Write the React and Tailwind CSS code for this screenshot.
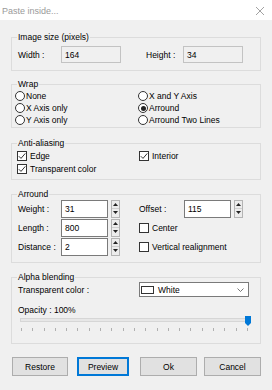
function Group({ title, className, children }) {
  return (
    <fieldset className={`border border-[#dcdcdc] ${className}`}>
      <legend className="ml-[5px] px-[1px] h-[10px] leading-[10px]">{title}</legend>
      {children}
    </fieldset>
  );
}

function Radio({ label, checked }) {
  return (
    <div className="h-[12px] flex items-center">
      <span className="w-[10px] h-[10px] rounded-full border border-[#333] bg-white flex items-center justify-center">
        {checked && <span className="w-[5px] h-[5px] rounded-full bg-[#222]" />}
      </span>
      <span className="ml-[1px]">{label}</span>
    </div>
  );
}

function Check({ label, checked }) {
  return (
    <div className="flex items-center">
      <span className="w-[10px] h-[10px] border border-[#333] bg-white flex items-center justify-center">
        {checked && (
          <svg width="8" height="8" viewBox="0 0 8 8">
            <path d="M0.8 4.2 L3 6.4 L7.3 1.4" fill="none" stroke="#333" strokeWidth="1" />
          </svg>
        )}
      </span>
      <span className="ml-[3px]">{label}</span>
    </div>
  );
}

function Spin() {
  return (
    <div className="w-[9px] h-[18px] border border-[#b4b4b4] bg-[#ececec] flex flex-col">
      <div className="flex-1 flex items-center justify-center border-b border-[#cfcfcf]">
        <svg width="5" height="3" viewBox="0 0 5 3"><path d="M0 3 L2.5 0 L5 3 Z" fill="#222" /></svg>
      </div>
      <div className="flex-1 flex items-center justify-center">
        <svg width="5" height="3" viewBox="0 0 5 3"><path d="M0 0 L5 0 L2.5 3 Z" fill="#222" /></svg>
      </div>
    </div>
  );
}

function NumField({ value }) {
  return (
    <div className="w-[47px] h-[18px] border border-[#7a7a7a] bg-white flex items-center pl-[3px]">{value}</div>
  );
}

function Button({ children, w, primary }) {
  return (
    <button
      className={`${w} h-[19px] bg-[#e1e1e1] flex items-center justify-center ${
        primary ? "border border-[#0078d7] shadow-[inset_0_0_0_1px_#0078d7]" : "border border-[#adadad]"
      }`}
    >
      {children}
    </button>
  );
}

export default function App() {
  const ticks = Array.from({ length: 21 });

  return (
    <div className="w-[272px] h-[390px] overflow-hidden bg-[#f0f0f0] font-['Liberation_Sans',Arial,sans-serif] text-[8.5px] leading-[12px] text-black">
      <div className="h-[20px] bg-white flex items-center justify-between pl-[2px] pr-[8px] pt-[2px]">
        <span className="text-[9px] text-[#9a9a9a]">Paste inside...</span>
        <svg width="8" height="8" viewBox="0 0 8 8">
          <path d="M0 0 L8 8 M8 0 L0 8" stroke="#8a8a8a" strokeWidth="0.8" />
        </svg>
      </div>

      <div className="px-[11px]">
        <Group title="Image size (pixels)" className="mt-[12px]">
          <div className="grid grid-cols-[127px_1fr] pt-[4px] pb-[7px]">
            <div className="flex items-center h-[17px] pl-[6px]">
              <span className="w-[43px]">Width :</span>
              <div className="w-[60px] h-[17px] border border-[#c3c3c3] bg-[#f0f0f0] flex items-center pl-[3px]">164</div>
            </div>
            <div className="flex items-center h-[17px] pl-[7px]">
              <span className="w-[37px]">Height :</span>
              <div className="w-[60px] h-[17px] border border-[#c3c3c3] bg-[#f0f0f0] flex items-center pl-[3px]">34</div>
            </div>
          </div>
        </Group>

        <Group title="Wrap" className="mt-[8px]">
          <div className="grid grid-cols-[126px_1fr] pt-[1px] pb-[1px]">
            <div className="pl-[3px]">
              <Radio label="None" />
              <Radio label="X Axis only" />
              <Radio label="Y Axis only" />
            </div>
            <div>
              <Radio label="X and Y Axis" />
              <Radio label="Arround" checked />
              <Radio label="Arround Two Lines" />
            </div>
          </div>
        </Group>

        <Group title="Anti-aliasing" className="mt-[10px]">
          <div className="grid grid-cols-[127px_1fr] pt-[1px] pb-[4px]">
            <div className="pl-[5px] flex flex-col">
              <div className="h-[13px] flex items-center"><Check label="Edge" checked /></div>
              <div className="h-[13px] flex items-center"><Check label="Transparent color" checked /></div>
            </div>
            <div>
              <div className="h-[13px] flex items-center"><Check label="Interior" checked /></div>
            </div>
          </div>
        </Group>

        <Group title="Arround" className="mt-[9px]">
          <div className="grid grid-cols-[127px_1fr] pb-[6px]">
            <div className="pl-[6px]">
              {[
                ["Weight :", "31"],
                ["Length :", "800"],
                ["Distance :", "2"],
              ].map(([label, value]) => (
                <div key={label} className="h-[19px] flex items-center">
                  <span className="w-[43px]">{label}</span>
                  <NumField value={value} />
                  <div className="ml-[3px]"><Spin /></div>
                </div>
              ))}
            </div>
            <div>
              <div className="h-[19px] flex items-center">
                <span className="w-[45px]">Offset :</span>
                <NumField value="115" />
                <div className="ml-[3px]"><Spin /></div>
              </div>
              <div className="h-[19px] flex items-center"><Check label="Center" /></div>
              <div className="h-[19px] flex items-center"><Check label="Vertical realignment" /></div>
            </div>
          </div>
        </Group>

        <Group title="Alpha blending" className="mt-[9px]">
          <div className="pb-[12px]">
            <div className="grid grid-cols-[127px_1fr] h-[15px]">
              <div className="pl-[6px] flex items-center">Transparent color :</div>
              <div className="w-[110px] h-[15px] border border-[#7a7a7a] bg-white flex items-center pl-[1px] pr-[4px]">
                <span className="w-[13px] h-[8px] border border-[#333] bg-white" />
                <span className="ml-[4px] flex-1">White</span>
                <svg width="7" height="4" viewBox="0 0 7 4">
                  <path d="M0.5 0.5 L3.5 3.5 L6.5 0.5" fill="none" stroke="#555" strokeWidth="0.8" />
                </svg>
              </div>
            </div>
            <div className="pl-[6px] mt-[7px] h-[12px] leading-[12px]">Opacity : 100%</div>
            <div className="relative h-[12px] pt-[2px]">
              <div className="ml-[8px] mr-[9px] h-[4px] bg-[#e7e7e7] border border-[#d6d6d6]" />
              <svg className="absolute right-[9px] top-0" width="6" height="10" viewBox="0 0 6 10">
                <path d="M0 0 L6 0 L6 7 L3 10 L0 7 Z" fill="#0078d7" />
              </svg>
            </div>
            <div className="ml-[9px] mr-[12px] flex justify-between h-[3px]">
              {ticks.map((_, i) => (
                <span key={i} className="w-[1px] h-[3px] bg-[#b0b0b0]" />
              ))}
            </div>
          </div>
        </Group>

        <div className="mt-[13px] flex pl-[1px]">
          <Button w="w-[56px]">Restore</Button>
          <div className="ml-[9px]"><Button w="w-[52px]" primary>Preview</Button></div>
          <div className="ml-[11px]"><Button w="w-[57px]">Ok</Button></div>
          <div className="ml-[7px]"><Button w="w-[57px]">Cancel</Button></div>
        </div>
      </div>
    </div>
  );
}
